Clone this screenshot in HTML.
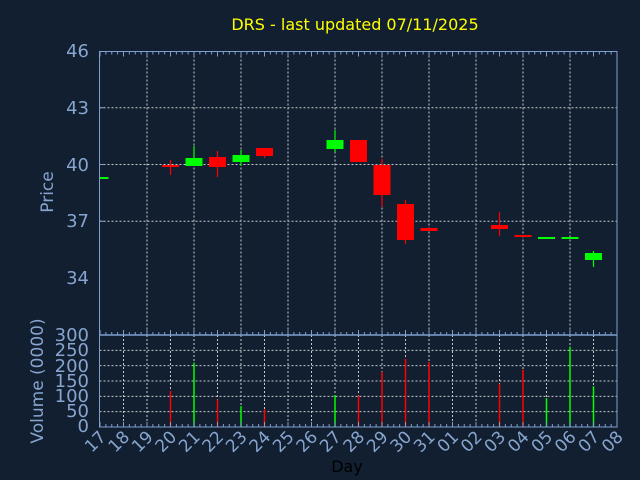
<!DOCTYPE html>
<html><head><meta charset="utf-8"><style>
html,body{margin:0;padding:0;background:#111f30;}
svg{display:block;font-family:"DejaVu Sans","Liberation Sans",sans-serif;}
</style></head><body>
<svg id="s" width="640" height="480" viewBox="0 0 640 480" xmlns="http://www.w3.org/2000/svg">
<rect width="640" height="480" fill="#111f30"/>
<text x="355" y="30" fill="#ffff00" font-size="16" text-anchor="middle">DRS - last updated 07/11/2025</text>
<g id="g"></g>
<g fill="#87a5cf" font-size="18" text-anchor="end">
<text x="89" y="57">46</text><text x="89" y="114">43</text><text x="89" y="171">40</text><text x="89" y="227">37</text><text x="89" y="284">34</text>
<text x="89" y="341">300</text><text x="89" y="356">250</text><text x="89" y="372">200</text><text x="89" y="387">150</text><text x="89" y="402">100</text><text x="89" y="417">50</text><text x="89" y="432">0</text>
</g>
<text transform="translate(53,192) rotate(-90)" fill="#87a5cf" font-size="17" text-anchor="middle">Price</text>
<text transform="translate(43,381) rotate(-90)" fill="#87a5cf" font-size="17" text-anchor="middle">Volume (0000)</text>
<text x="347" y="472" fill="#000" font-size="16" text-anchor="middle">Day</text>
</svg>
<script>
var g=document.getElementById('g'),h='';
var L=99.5,R=617,T=51.5,M=335,B=427,dx=23.5;
function X(i){return L+0.5+i*dx;}
function P(p){return 278-(p-34)*18.92;}
[37,40,43].forEach(function(p){var y=P(p);h+='<line x1="'+L+'" x2="'+R+'" y1="'+y+'" y2="'+y+'" stroke="#c8c8c8" stroke-dasharray="2,2"/>';});
for(var i=2;i<22;i+=2){var x=X(i);h+='<line x1="'+x+'" x2="'+x+'" y1="'+T+'" y2="'+M+'" stroke="#c8c8c8" stroke-dasharray="2,2"/>';}
for(var v=50;v<300;v+=50){var y=B-v*0.3067;h+='<line x1="'+L+'" x2="'+R+'" y1="'+y+'" y2="'+y+'" stroke="#c8c8c8" stroke-dasharray="2,2"/>';}
for(var i=1;i<22;i++){var x=X(i);h+='<line x1="'+x+'" x2="'+x+'" y1="'+M+'" y2="'+B+'" stroke="#c8c8c8" stroke-dasharray="2,2"/>';}
var G='#00ff00',Rd='#ff0000';
var c=[[0,177,179,177,179,G],[3,165,166,160,175,Rd],[4,158,166,146,166,G],[5,157,167,151,177,Rd],[6,155,162,150,166,G],[7,148,156,148,158,Rd],
[10,140,149,130,152,G],[11,140,162,140,162,Rd],[12,165,195,159,207,Rd],[13,204,240,200,244,Rd],[14,228,231,228,231,Rd],
[17,225,229,212,236,Rd],[18,235,237,235,237,Rd],[19,237,239,237,239,G],[20,237,239,237,239,G],[21,253,260,251,267,G]];
c.forEach(function(k){var x=X(k[0]);var w=k[0]==0?9:17;var x0=k[0]==0?L:x-8.5;
h+='<line x1="'+x+'" x2="'+x+'" y1="'+k[3]+'" y2="'+k[4]+'" stroke="'+k[5]+'" stroke-width="1.2"/>';
h+='<rect x="'+x0+'" y="'+k[1]+'" width="'+w+'" height="'+Math.max(2,k[2]-k[1])+'" fill="'+k[5]+'"/>';});
var vb=[[3,118,Rd],[4,210,G],[5,90,Rd],[6,68,G],[7,58,Rd],[10,104,G],[11,103,Rd],[12,180,Rd],[13,222,Rd],[14,212,Rd],[17,141,Rd],[18,187,Rd],[19,94,G],[20,262,G],[21,133,G]];
vb.forEach(function(k){var x=X(k[0]);h+='<rect x="'+(x-0.75)+'" y="'+(B-k[1]*0.3067)+'" width="1.5" height="'+(k[1]*0.3067)+'" fill="'+k[2]+'"/>';});
var A='#7f9fcf';
h+='<rect x="'+L+'" y="'+T+'" width="'+(R-L)+'" height="'+(B-T)+'" fill="none" stroke="'+A+'"/>';
h+='<line x1="'+L+'" x2="'+R+'" y1="'+M+'" y2="'+M+'" stroke="'+A+'" stroke-width="1.5"/>';
for(var j=0;j<=88;j++){var x=L+0.5+j*dx/4;var big=j%4==0;
h+='<line x1="'+x+'" x2="'+x+'" y1="'+T+'" y2="'+(T+(big?5:3))+'" stroke="'+A+'"/>';
h+='<line x1="'+x+'" x2="'+x+'" y1="'+M+'" y2="'+(M-(big?5:3))+'" stroke="'+A+'"/>';
h+='<line x1="'+x+'" x2="'+x+'" y1="'+B+'" y2="'+(B-(big?5:3))+'" stroke="'+A+'"/>';}
[37,40,43].forEach(function(p){h+='<line x1="'+L+'" x2="'+(L+5)+'" y1="'+P(p)+'" y2="'+P(p)+'" stroke="'+A+'"/>';});
var d=['17','18','19','20','21','22','23','24','25','26','27','28','29','30','31','01','02','03','04','05','06','07','08'];
d.forEach(function(s,i){var x=X(i);h+='<text transform="translate('+(x+7)+','+(B+11)+') rotate(-45)" fill="#87a5cf" font-size="17" text-anchor="end">'+s+'</text>';});
g.innerHTML=h;
</script>
</body></html>
